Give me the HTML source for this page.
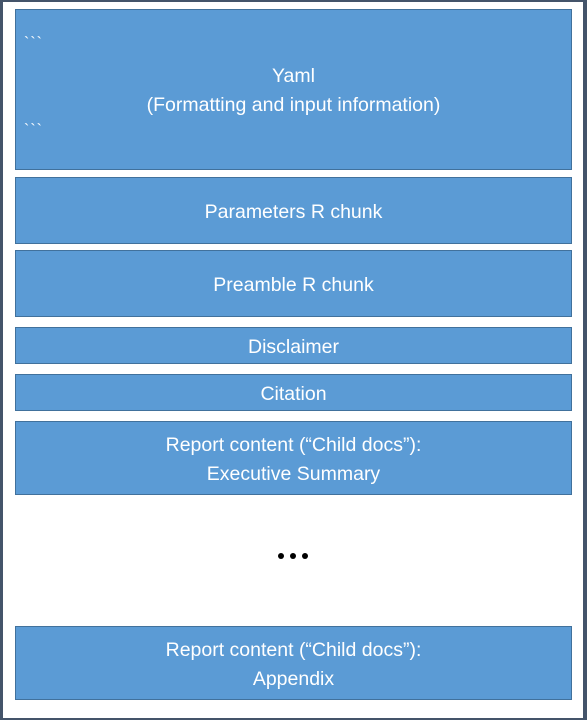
<!DOCTYPE html>
<html><head><style>
html,body{margin:0;padding:0}
body{width:587px;height:720px;background:#44546a;position:relative;overflow:hidden;font-family:"Liberation Sans",Arial,sans-serif}
.pg{position:absolute;left:3px;top:2px;width:580px;height:716px;background:#fff}
.b{position:absolute;left:15px;background:#5b9bd5;border:1px solid #41719c;color:#fff;font-size:19.5px;line-height:29px;text-align:center;display:flex;flex-direction:column;justify-content:center;box-sizing:border-box;width:557px;padding-top:3px}
.t{position:absolute;left:24px;font-size:16px;color:#fff;letter-spacing:1px}
.d{position:absolute;top:553px;width:6px;height:6px;border-radius:50%;background:#000}
</style></head><body>
<div class="pg"></div>
<div class="b" style="top:9px;height:161px">Yaml<br>(Formatting and input information)</div>
<div class="t" style="top:35px">&#96;&#96;&#96;</div>
<div class="t" style="top:122px">&#96;&#96;&#96;</div>
<div class="b" style="top:177px;height:67px">Parameters R chunk</div>
<div class="b" style="top:250px;height:67px">Preamble R chunk</div>
<div class="b" style="top:327px;height:37px">Disclaimer</div>
<div class="b" style="top:374px;height:37px">Citation</div>
<div class="b" style="top:421px;height:74px">Report content (“Child docs”):<br>Executive Summary</div>
<div class="d" style="left:278px"></div><div class="d" style="left:290px"></div><div class="d" style="left:302px"></div>
<div class="b" style="top:626px;height:74px">Report content (“Child docs”):<br>Appendix</div>
</body></html>
